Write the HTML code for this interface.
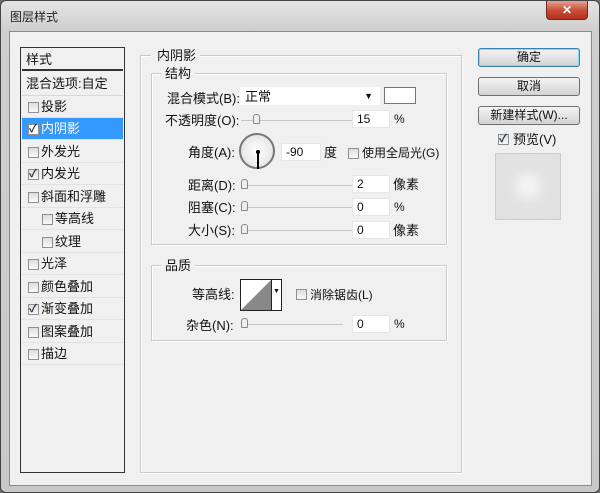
<!DOCTYPE html><html><head><meta charset="utf-8"><style>
*{margin:0;padding:0;box-sizing:border-box}
body{width:600px;height:493px;background:#6d6d6d;font-family:"Liberation Sans","Noto Sans CJK SC",sans-serif;font-size:12px;color:#111;position:relative;overflow:hidden}
.win{position:absolute;left:0;top:0;width:600px;height:493px;border-radius:6px;background:linear-gradient(#e4e4e4,#cfcfcf 30px,#c8c8c8);border:1px solid #444}
.client{position:absolute;left:8px;top:30px;width:583px;height:455px;background:#f0f0f0;border:1px solid #8a8a8a}
.a{position:absolute;white-space:nowrap;line-height:15px}
.box{position:absolute;border:1px solid #c9c9c9;box-shadow:inset 1px 1px #fff,1px 1px #fff}
.cb{position:absolute;width:11px;height:11px;border:1px solid #8f8f8f;background:linear-gradient(#ddd,#fafafa)}
.cb.on::after{content:"✓";position:absolute;left:0;top:-3px;font-size:11px;line-height:14px;color:#234;font-weight:bold}
.btn{position:absolute;width:102px;height:19px;border:1px solid #707070;border-radius:3px;background:linear-gradient(#f4f4f4,#e4e4e4 50%,#d2d2d2);text-align:center;line-height:17px;font-size:12px}
.inp{position:absolute;height:18px;background:#fff;border:1px solid #e6e6e6;padding-left:4px;line-height:17px}
.sl{position:absolute;height:1px;background:#c5c5c5;width:115px}
.th{position:absolute;width:7px;height:10px;border:1px solid #888;border-radius:3px 3px 1px 1px;background:#eee}
.row{position:absolute;left:21px;width:101px;height:22px;border-bottom:1px solid #e2e2e2;padding-left:19px;line-height:21px;font-size:13px}
</style></head><body>
<div class="win">
<div class="a" style="left:9px;top:9px;font-size:12px;color:#222">图层样式</div>
<div class="a" style="left:545px;top:0;width:42px;height:19px;border:1px solid #6b2a22;border-top:none;border-radius:0 0 4px 4px;background:linear-gradient(#e8a393,#c9503a 50%,#b5301c);color:#fff;text-align:center;font-weight:bold;font-size:12px;line-height:18px">✕</div>
<div class="client"></div>
<div class="a" style="left:19px;top:46px;width:105px;height:426px;border:1px solid #333;background:#f0f0f0"></div>
<div class="a" style="left:21px;top:48px;width:101px;height:22px;border-bottom:2px solid #333;padding-left:4px;line-height:22px;font-size:13px">样式</div>
<div class="a" style="left:21px;top:72px;width:101px;height:23px;border-bottom:1px solid #d8d8d8;padding-left:4px;line-height:22px;font-size:13px">混合选项:自定</div>
<div class="row" style="top:95px"><span class="cb" style="left:6px;top:6px"></span>投影</div>
<div class="row" style="top:117px;background:#3399ff;color:#fff"><span class="cb on" style="left:6px;top:6px;background:#fff"></span>内阴影</div>
<div class="row" style="top:140px"><span class="cb" style="left:6px;top:6px"></span>外发光</div>
<div class="row" style="top:162px"><span class="cb on" style="left:6px;top:6px"></span>内发光</div>
<div class="row" style="top:185px"><span class="cb" style="left:6px;top:6px"></span>斜面和浮雕</div>
<div class="row" style="top:207px;padding-left:33px"><span class="cb" style="left:20px;top:6px"></span>等高线</div>
<div class="row" style="top:230px;padding-left:33px"><span class="cb" style="left:20px;top:6px"></span>纹理</div>
<div class="row" style="top:252px"><span class="cb" style="left:6px;top:6px"></span>光泽</div>
<div class="row" style="top:275px"><span class="cb" style="left:6px;top:6px"></span>颜色叠加</div>
<div class="row" style="top:297px"><span class="cb on" style="left:6px;top:6px"></span>渐变叠加</div>
<div class="row" style="top:320px"><span class="cb" style="left:6px;top:6px"></span>图案叠加</div>
<div class="row" style="top:342px"><span class="cb" style="left:6px;top:6px"></span>描边</div>
<div class="box" style="left:139px;top:54px;width:322px;height:418px"></div>
<div class="a" style="left:150px;top:47px;background:#f0f0f0;padding:0 4px 0 6px;font-size:13px">内阴影</div>
<div class="box" style="left:150px;top:72px;width:296px;height:172px"></div>
<div class="a" style="left:160px;top:65px;background:#f0f0f0;padding:0 4px;font-size:13px">结构</div>
<div class="a" style="left:166px;top:90px;font-size:13px">混合模式(B):</div>
<div class="inp" style="left:239px;top:86px;width:140px;border-color:#fff;font-size:13px">正常<span style="position:absolute;right:6px;top:0;font-size:9px">▼</span></div>
<div class="a" style="left:383px;top:86px;width:32px;height:17px;border:1px solid #777;background:#fff"></div>
<div class="a" style="left:164px;top:112px;font-size:13px">不透明度(O):</div>
<div class="sl" style="left:240px;top:119px"></div><div class="th" style="left:252px;top:113px"></div>
<div class="inp" style="left:351px;top:109px;width:38px">15</div><div class="a" style="left:393px;top:111px">%</div>
<div class="a" style="left:187px;top:144px;font-size:13px">角度(A):</div>
<div class="a" style="left:238px;top:132px;width:36px;height:36px;border:2px solid #777;border-radius:50%;background:radial-gradient(#fff,#ddd)"></div>
<div class="a" style="left:255px;top:149px;width:4px;height:4px;background:#000;border-radius:50%"></div>
<div class="a" style="left:256px;top:151px;width:2px;height:17px;background:#000"></div>
<div class="inp" style="left:280px;top:142px;width:40px">-90</div>
<div class="a" style="left:323px;top:144px;font-size:13px">度</div>
<div class="cb" style="left:347px;top:147px"></div>
<div class="a" style="left:361px;top:145px;font-size:12px">使用全局光(G)</div>
<div class="a" style="left:187px;top:177px;font-size:13px">距离(D):</div>
<div class="sl" style="left:240px;top:184px"></div><div class="th" style="left:240px;top:178px"></div>
<div class="inp" style="left:351px;top:174px;width:38px">2</div><div class="a" style="left:392px;top:176px;font-size:13px">像素</div>
<div class="a" style="left:187px;top:199px;font-size:13px">阻塞(C):</div>
<div class="sl" style="left:240px;top:206px"></div><div class="th" style="left:240px;top:200px"></div>
<div class="inp" style="left:351px;top:197px;width:38px">0</div><div class="a" style="left:393px;top:199px">%</div>
<div class="a" style="left:187px;top:222px;font-size:13px">大小(S):</div>
<div class="sl" style="left:240px;top:229px"></div><div class="th" style="left:240px;top:223px"></div>
<div class="inp" style="left:351px;top:220px;width:38px">0</div><div class="a" style="left:392px;top:222px;font-size:13px">像素</div>
<div class="box" style="left:150px;top:264px;width:296px;height:76px"></div>
<div class="a" style="left:160px;top:257px;background:#f0f0f0;padding:0 4px;font-size:13px">品质</div>
<div class="a" style="left:191px;top:286px;font-size:13px">等高线:</div>
<div class="a" style="left:239px;top:278px;width:42px;height:32px;border:1px solid #222;background:#fff"></div>
<svg class="a" style="left:240px;top:279px" width="30" height="30"><polygon points="0,30 30,0 30,30" fill="#888"/></svg>
<div class="a" style="left:270px;top:279px;width:10px;height:30px;border-left:1px solid #222;background:#fff;font-size:7px;text-align:center;line-height:24px">▼</div>
<div class="cb" style="left:295px;top:288px"></div>
<div class="a" style="left:309px;top:287px;font-size:12px">消除锯齿(L)</div>
<div class="a" style="left:185px;top:317px;font-size:13px">杂色(N):</div>
<div class="sl" style="left:240px;top:323px;width:102px"></div><div class="th" style="left:240px;top:317px"></div>
<div class="inp" style="left:351px;top:314px;width:38px">0</div><div class="a" style="left:393px;top:316px">%</div>
<div class="btn" style="left:477px;top:47px;border-color:#3c7fb1;box-shadow:inset 0 0 0 1px #8fd3f5">确定</div>
<div class="btn" style="left:477px;top:76px">取消</div>
<div class="btn" style="left:477px;top:105px">新建样式(W)...</div>
<div class="cb on" style="left:497px;top:133px"></div>
<div class="a" style="left:512px;top:131px;font-size:13px">预览(V)</div>
<div class="a" style="left:494px;top:152px;width:66px;height:67px;border:1px solid #ccc;background:radial-gradient(#f3f3f3 10%,#e3e3e3 40%,#e0e0e0)"></div>
</div>
</body></html>
